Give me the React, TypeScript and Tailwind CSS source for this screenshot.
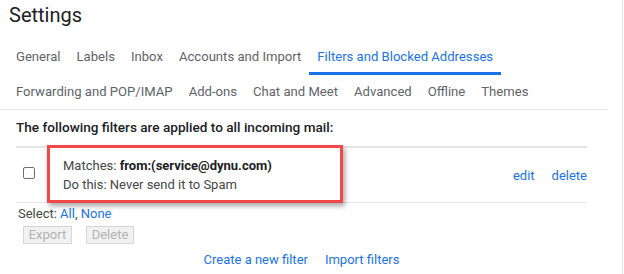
const TABS_ROW_1 = ["General", "Labels", "Inbox", "Accounts and Import", "Filters and Blocked Addresses"];
const TABS_ROW_2 = ["Forwarding and POP/IMAP", "Add-ons", "Chat and Meet", "Advanced", "Offline", "Themes"];
const ACTIVE_TAB = "Filters and Blocked Addresses";

function Tab({ label }: { label: string }) {
  const active = label === ACTIVE_TAB;
  return (
    <div
      className={
        active
          ? "flex h-full items-center border-b-[3px] border-[#1a73e8] px-2 pt-[3px] text-[#1a73e8]"
          : "flex h-full items-center px-2 text-[#5f6368]"
      }
    >
      {label}
    </div>
  );
}

export default function App() {
  return (
    <div
      className="relative h-[274px] w-[623px] overflow-hidden border-r border-[#e3e3e3] bg-white text-[#202124]"
      style={{ fontFamily: "Roboto, 'Liberation Sans', sans-serif" }}
    >
      {/* Title */}
      <div className="h-[38px] pl-[9px] pt-[1px] text-[20px] leading-[28px]">Settings</div>

      {/* Tabs */}
      <div className="w-[608px] border-b border-[#e8e8e8] pl-2 text-[13.1px]">
        <div className="flex h-[37px]">
          {TABS_ROW_1.map((t) => (
            <Tab key={t} label={t} />
          ))}
        </div>
        <div className="flex h-[34px]">
          {TABS_ROW_2.map((t) => (
            <Tab key={t} label={t} />
          ))}
        </div>
      </div>

      {/* Filters */}
      <div className="px-4">
        <div className="flex h-[36px] items-center pb-[2px] text-[13.6px] font-medium">
          The following filters are applied to all incoming mail:
        </div>

        <div className="w-[571px] border-t-2 border-b border-t-[#e5e5e5] border-b-[#e8e8e8]">
          <div className="flex h-[54px] items-center text-[13px] leading-[19px]">
            <div className="ml-[7px] mb-[5px] h-[12px] w-[12px] rounded-[2px] border border-[#6f6f6f]" />
            <div className="ml-[28px] flex-1 text-[#444746]">
              <div>
                Matches: <span className="font-bold text-[#202124]">from:(service@dynu.com)</span>
              </div>
              <div>Do this: Never send it to Spam</div>
            </div>
            <div className="flex gap-[17px] text-[13px] text-[#1a73e8]">
              <span>edit</span>
              <span>delete</span>
            </div>
          </div>
        </div>

        <div className="pl-[2px] pt-[1px] text-[13px] leading-[19px] text-[#444746]">
          Select: <span className="text-[#1a73e8]">All</span>, <span className="text-[#1a73e8]">None</span>
        </div>

        <div className="mt-[3px] flex gap-[14px] pl-[7px] text-[13px] text-[#b3b3b3]">
          <div className="flex h-[18px] w-[49px] items-center justify-center border border-[#d6d6d6] bg-[#f1f1f1]">
            Export
          </div>
          <div className="flex h-[18px] w-[48px] items-center justify-center border border-[#d6d6d6] bg-[#f1f1f1]">
            Delete
          </div>
        </div>

        <div className="mt-[6px] flex w-[571px] justify-center gap-[17px] text-[13px] leading-[19px] text-[#1a73e8]">
          <span>Create a new filter</span>
          <span>Import filters</span>
        </div>
      </div>

      {/* Highlight annotation */}
      <div className="absolute left-[47px] top-[145px] h-[58px] w-[296px] border-[3px] border-[#f04848] shadow-[2px_3px_5px_rgba(0,0,0,0.35)]" />
    </div>
  );
}
